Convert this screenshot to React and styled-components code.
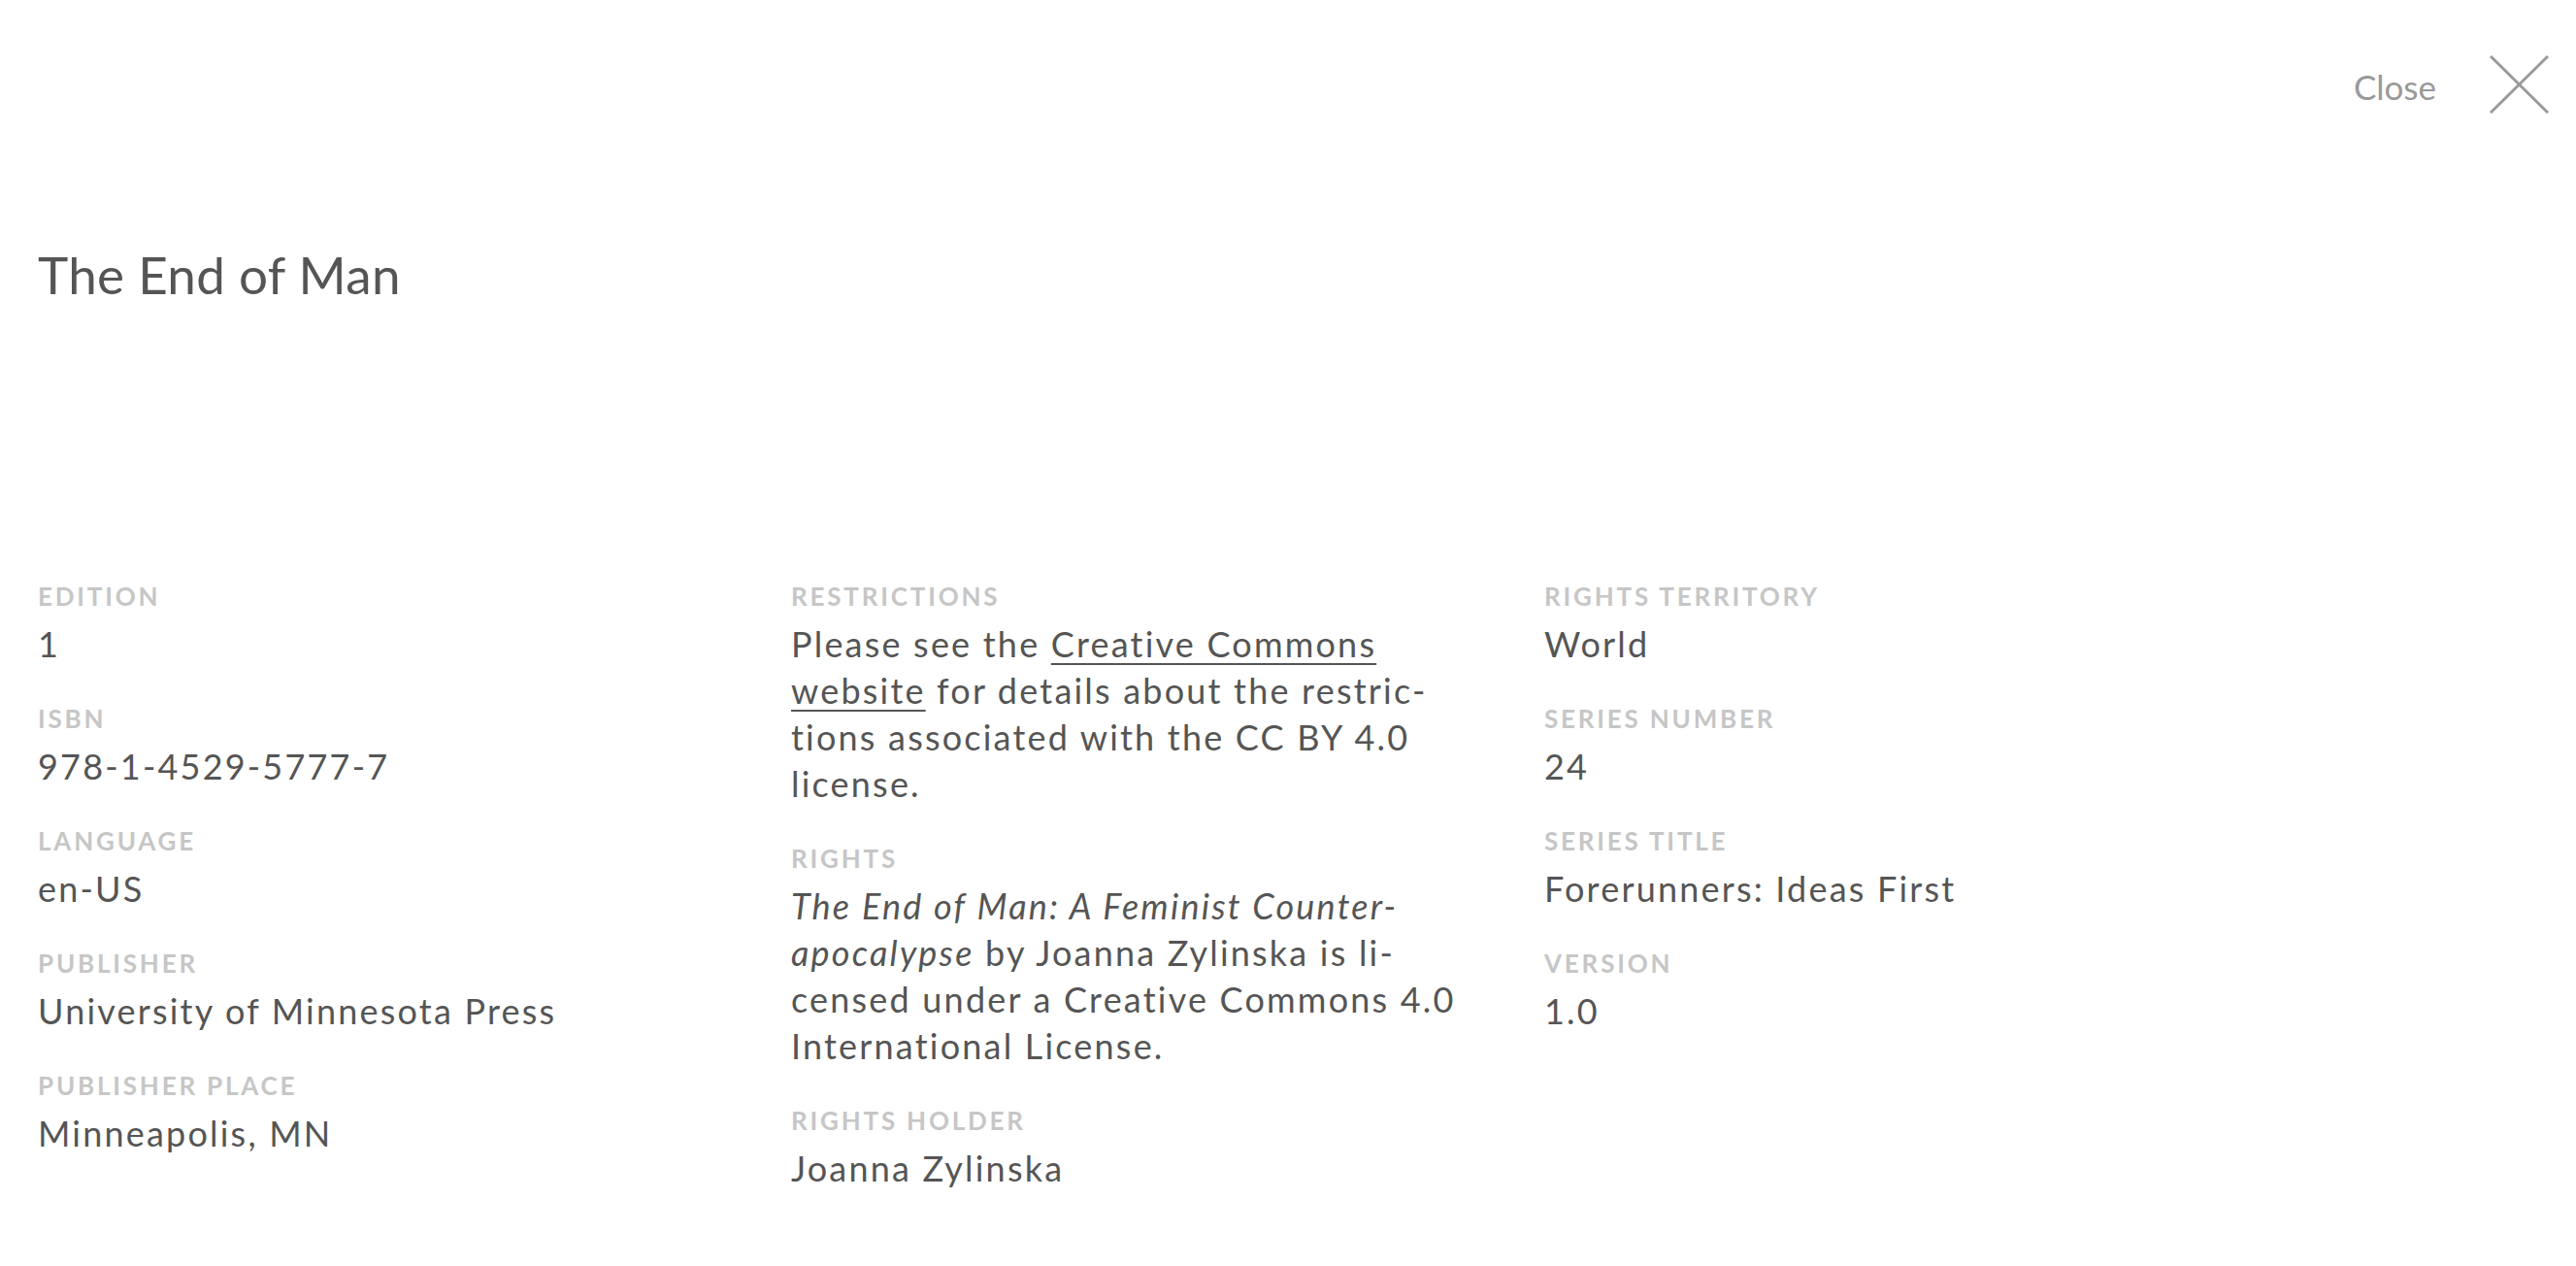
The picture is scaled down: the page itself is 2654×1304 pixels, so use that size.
import styled, { createGlobalStyle } from 'styled-components';

const GlobalStyle = createGlobalStyle`
  html, body {
    margin: 0;
    padding: 0;
    background: #fff;
  }
  body {
    font-family: Lato, "Noto Sans", sans-serif;
    color: #555;
  }
`;

const Page = styled.div`
  min-height: 1304px;
  box-sizing: border-box;
  padding: 57px 28px 0 39px;
`;

const TopBar = styled.div`
  display: flex;
  justify-content: flex-end;
  align-items: center;
  gap: 55px;
  height: 60px;
`;

const CloseLabel = styled.span`
  font-size: 35px;
  color: #999;
  line-height: 1;
  padding-top: 4px;
`;

const CloseButton = styled.button`
  width: 61px;
  height: 60px;
  padding: 0;
  border: 0;
  background: none;
  cursor: pointer;
  display: block;
`;

const Title = styled.h1`
  margin: 134px 0 0;
  font-size: 53px;
  line-height: 64px;
  font-weight: 400;
  letter-spacing: 0.3px;
  color: #555;
`;

const Columns = styled.div`
  display: grid;
  grid-template-columns: repeat(3, 720px);
  column-gap: 56px;
  margin-top: 279px;
`;

const Column = styled.div`
  display: flex;
  flex-direction: column;
  gap: 33px;
`;

const Field = styled.div`
  display: flex;
  flex-direction: column;
`;

const Label = styled.div`
  font-size: 26px;
  line-height: 40px;
  font-weight: 700;
  letter-spacing: 2.8px;
  text-transform: uppercase;
  color: #c6c6c6;
  margin-bottom: 5px;
`;

const Value = styled.div`
  font-size: 36px;
  line-height: 48px;
  letter-spacing: 2.2px;
  color: #555;
`;

const Line = styled.span`
  display: block;
  white-space: nowrap;
`;

const Link = styled.a`
  color: inherit;
  text-decoration: underline;
  text-decoration-thickness: 2px;
  text-underline-offset: 6px;
`;

const CrossIcon = () => (
  <svg width="61" height="60" viewBox="0 0 61 60">
    <path d="M1 1 L60 59 M60 1 L1 59" stroke="#9a9a9a" strokeWidth="3" fill="none" />
  </svg>
);

const left = [
  ['Edition', '1'],
  ['ISBN', '978-1-4529-5777-7'],
  ['Language', 'en-US'],
  ['Publisher', 'University of Minnesota Press'],
  ['Publisher Place', 'Minneapolis, MN'],
];

const right = [
  ['Rights Territory', 'World'],
  ['Series Number', '24'],
  ['Series Title', 'Forerunners: Ideas First'],
  ['Version', '1.0'],
];

const MetaField = ({ label, children }) => (
  <Field>
    <Label>{label}</Label>
    <Value>{children}</Value>
  </Field>
);

const App = () => {
  return (
    <>
      <GlobalStyle />
      <Page>
        <TopBar>
          <CloseLabel>Close</CloseLabel>
          <CloseButton aria-label="Close">
            <CrossIcon />
          </CloseButton>
        </TopBar>
        <Title>The End of Man</Title>
        <Columns>
          <Column>
            {left.map(([label, value]) => (
              <MetaField key={label} label={label}>{value}</MetaField>
            ))}
          </Column>
          <Column>
            <MetaField label="Restrictions">
              <Line>
                Please see the <Link href="#">Creative Commons</Link>
              </Line>
              <Line>
                <Link href="#">website</Link> for details about the restric-
              </Line>
              <Line>tions associated with the CC BY 4.0</Line>
              <Line>license.</Line>
            </MetaField>
            <MetaField label="Rights">
              <Line>
                <i>The End of Man: A Feminist Counter-</i>
              </Line>
              <Line>
                <i>apocalypse</i> by Joanna Zylinska is li-
              </Line>
              <Line>censed under a Creative Commons 4.0</Line>
              <Line>International License.</Line>
            </MetaField>
            <MetaField label="Rights Holder">Joanna Zylinska</MetaField>
          </Column>
          <Column>
            {right.map(([label, value]) => (
              <MetaField key={label} label={label}>{value}</MetaField>
            ))}
          </Column>
        </Columns>
      </Page>
    </>
  );
};

export default App;
